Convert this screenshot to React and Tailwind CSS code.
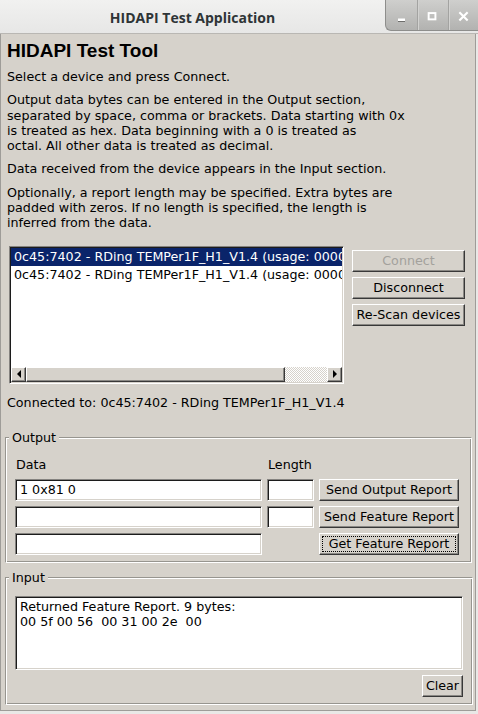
import React from 'react';

const sunken =
  'border border-t-[#858380] border-l-[#858380] border-r-white border-b-white shadow-[inset_1px_1px_0_#1c1c1c,inset_-1px_-1px_0_#d6d2cb]';
const raised =
  'border border-t-white border-l-white border-r-[#383838] border-b-[#383838] shadow-[inset_-1px_-1px_0_#8a8884] bg-[#d6d2cb]';

const DEVICE = '0c45:7402 - RDing TEMPer1F_H1_V1.4 (usage: 0000:0000)';

function WinButton({ children, first }) {
  return (
    <div
      className={`w-[31px] h-full flex items-center justify-center ${
        first ? '' : 'border-l border-l-[#a3a3a1] shadow-[inset_1px_0_0_#d2d2d0]'
      }`}
    >
      {children}
    </div>
  );
}

function TitleBar() {
  return (
    <div className="flex h-[34px] bg-[linear-gradient(#f1f1f0,#e7e7e6)] border-b border-b-[#b9b7b3]">
      <div className="flex-1 flex items-center justify-center pt-[2px] font-['Open_Sans',sans-serif] font-bold text-[14px] text-[#2e3436]">
        HIDAPI Test Application
      </div>
      <div className="flex h-[31px] w-[93px] rounded-bl-[6px] border-l border-b border-[#8e8e8c] bg-[linear-gradient(#cfcfcd,#b2b2b0)]">
        <WinButton first>
          <svg width="31" height="30" viewBox="0 0 31 30">
            <rect x="12" y="18.5" width="7" height="2.5" fill="#6e6e6c" transform="translate(0 1)" />
            <rect x="12" y="18.5" width="7" height="2.5" fill="#fff" />
          </svg>
        </WinButton>
        <WinButton>
          <svg width="31" height="30" viewBox="0 0 31 30">
            <rect x="11" y="13" width="7" height="6.5" fill="none" stroke="#fff" strokeWidth="2" />
          </svg>
        </WinButton>
        <WinButton>
          <svg width="31" height="30" viewBox="0 0 31 30">
            <path d="M11.5 13 L18.5 20 M18.5 13 L11.5 20" stroke="#fff" strokeWidth="2.2" strokeLinecap="square" />
          </svg>
        </WinButton>
      </div>
    </div>
  );
}

function Button({ children, className = '', disabled, focused }) {
  return (
    <button
      className={`${raised} h-[22px] flex items-center justify-center whitespace-nowrap ${
        disabled ? 'text-[#a3a19c]' : 'text-black'
      } ${focused ? 'outline-1 outline-dotted outline-black -outline-offset-4' : ''} ${className}`}
    >
      {children}
    </button>
  );
}

function Arrow({ dir }) {
  return (
    <div className={`${raised} w-[15px] h-[15px] flex items-center justify-center`}>
      <svg width="6" height="8" viewBox="0 0 6 8">
        {dir === 'left' ? <path d="M5 0 L5 8 L1 4 Z" fill="#000" /> : <path d="M1 0 L1 8 L5 4 Z" fill="#000" />}
      </svg>
    </div>
  );
}

function DeviceList() {
  return (
    <div className={`${sunken} w-[335px] h-[138px] bg-white flex flex-col p-[1px]`}>
      <div className="flex-1 overflow-hidden">
        <div className="h-[18px] leading-[18px] pl-[3px] whitespace-nowrap bg-[#0a246a] text-white">{DEVICE}</div>
        <div className="h-[18px] leading-[18px] pl-[3px] whitespace-nowrap">{DEVICE}</div>
      </div>
      <div className="flex h-[15px]">
        <Arrow dir="left" />
        <div className={`${raised} w-[259px] h-[15px]`} />
        <div className="flex-1 bg-[image:repeating-conic-gradient(#ffffff_0_25%,#d6d2cb_0_50%)] bg-[length:2px_2px]" />
        <Arrow dir="right" />
      </div>
    </div>
  );
}

function GroupBox({ title, children, className = '' }) {
  return (
    <fieldset
      className={`w-[467px] border border-t-[#97958f] border-l-[#97958f] border-r-white border-b-white shadow-[inset_1px_1px_0_#fff,inset_-1px_-1px_0_#97958f] ${className}`}
    >
      <legend className="ml-[3px] px-[3px] leading-[15.3px] bg-[#d6d2cb]">{title}</legend>
      {children}
    </fieldset>
  );
}

function LineEdit({ value = '', className = '' }) {
  return (
    <input
      type="text"
      readOnly
      value={value}
      className={`${sunken} h-[22px] bg-white px-[4px] text-black outline-none ${className}`}
    />
  );
}

export default function App() {
  return (
    <div className="w-[478px] h-[714px] bg-[#e9e8e6] font-['DejaVu_Sans',sans-serif] text-[12.7px] leading-[15.3px] text-black overflow-hidden">
      <TitleBar />
      <div className="w-[476px] h-[677px] bg-[#d6d2cb] border-l border-r border-b border-[#9e9c98] pl-[4px] pt-[6px]">
        <h1 className="ml-[2px] font-['Liberation_Sans',Arial,sans-serif] font-bold text-[19px] leading-[22px]">
          HIDAPI Test Tool
        </h1>
        <p className="ml-[2px] mt-[7px]">Select a device and press Connect.</p>
        <p className="ml-[2px] mt-[8px]">
          Output data bytes can be entered in the Output section,
          <br />
          separated by space, comma or brackets. Data starting with 0x
          <br />
          is treated as hex. Data beginning with a 0 is treated as
          <br />
          octal. All other data is treated as decimal.
        </p>
        <p className="ml-[2px] mt-[8px]">Data received from the device appears in the Input section.</p>
        <p className="ml-[2px] mt-[8px]">
          Optionally, a report length may be specified. Extra bytes are
          <br />
          padded with zeros. If no length is specified, the length is
          <br />
          inferred from the data.
        </p>

        <div className="flex mt-[15px] ml-[4px] gap-[8px]">
          <DeviceList />
          <div className="flex flex-col gap-[5px] mt-[4px]">
            <Button disabled className="w-[113px]">Connect</Button>
            <Button className="w-[113px]">Disconnect</Button>
            <Button className="w-[113px]">Re-Scan devices</Button>
          </div>
        </div>

        <p className="ml-[2px] mt-[11px] whitespace-nowrap">Connected to: 0c45:7402 - RDing TEMPer1F_H1_V1.4</p>

        <GroupBox title="Output" className="mt-[20px]">
          <div className="px-[9px] pt-[12px] pb-[7px]">
            <div className="flex gap-[5px]">
              <span className="w-[247px] pl-[1px]">Data</span>
              <span className="w-[47px] pl-[1px]">Length</span>
            </div>
            <div className="mt-[6px] flex flex-col gap-[5px]">
              <div className="flex gap-[5px]">
                <LineEdit value="1 0x81 0" className="w-[247px]" />
                <LineEdit className="w-[47px]" />
                <Button className="w-[140px]">Send Output Report</Button>
              </div>
              <div className="flex gap-[5px]">
                <LineEdit className="w-[247px]" />
                <LineEdit className="w-[47px]" />
                <Button className="w-[140px]">Send Feature Report</Button>
              </div>
              <div className="flex gap-[5px]">
                <LineEdit className="w-[247px]" />
                <div className="w-[47px]" />
                <Button focused className="w-[140px]">Get Feature Report</Button>
              </div>
            </div>
          </div>
        </GroupBox>

        <GroupBox title="Input" className="mt-[7px]">
          <div className="px-[9px] pt-[11px] pb-[7px]">
            <div className={`${sunken} w-[448px] h-[74px] bg-white px-[4px] pt-[2px] leading-[15px] whitespace-pre`}>
              {'Returned Feature Report. 9 bytes:\n00 5f 00 56  00 31 00 2e  00'}
            </div>
            <div className="flex justify-end mt-[5px]">
              <Button className="w-[41px]">Clear</Button>
            </div>
          </div>
        </GroupBox>
      </div>
    </div>
  );
}
